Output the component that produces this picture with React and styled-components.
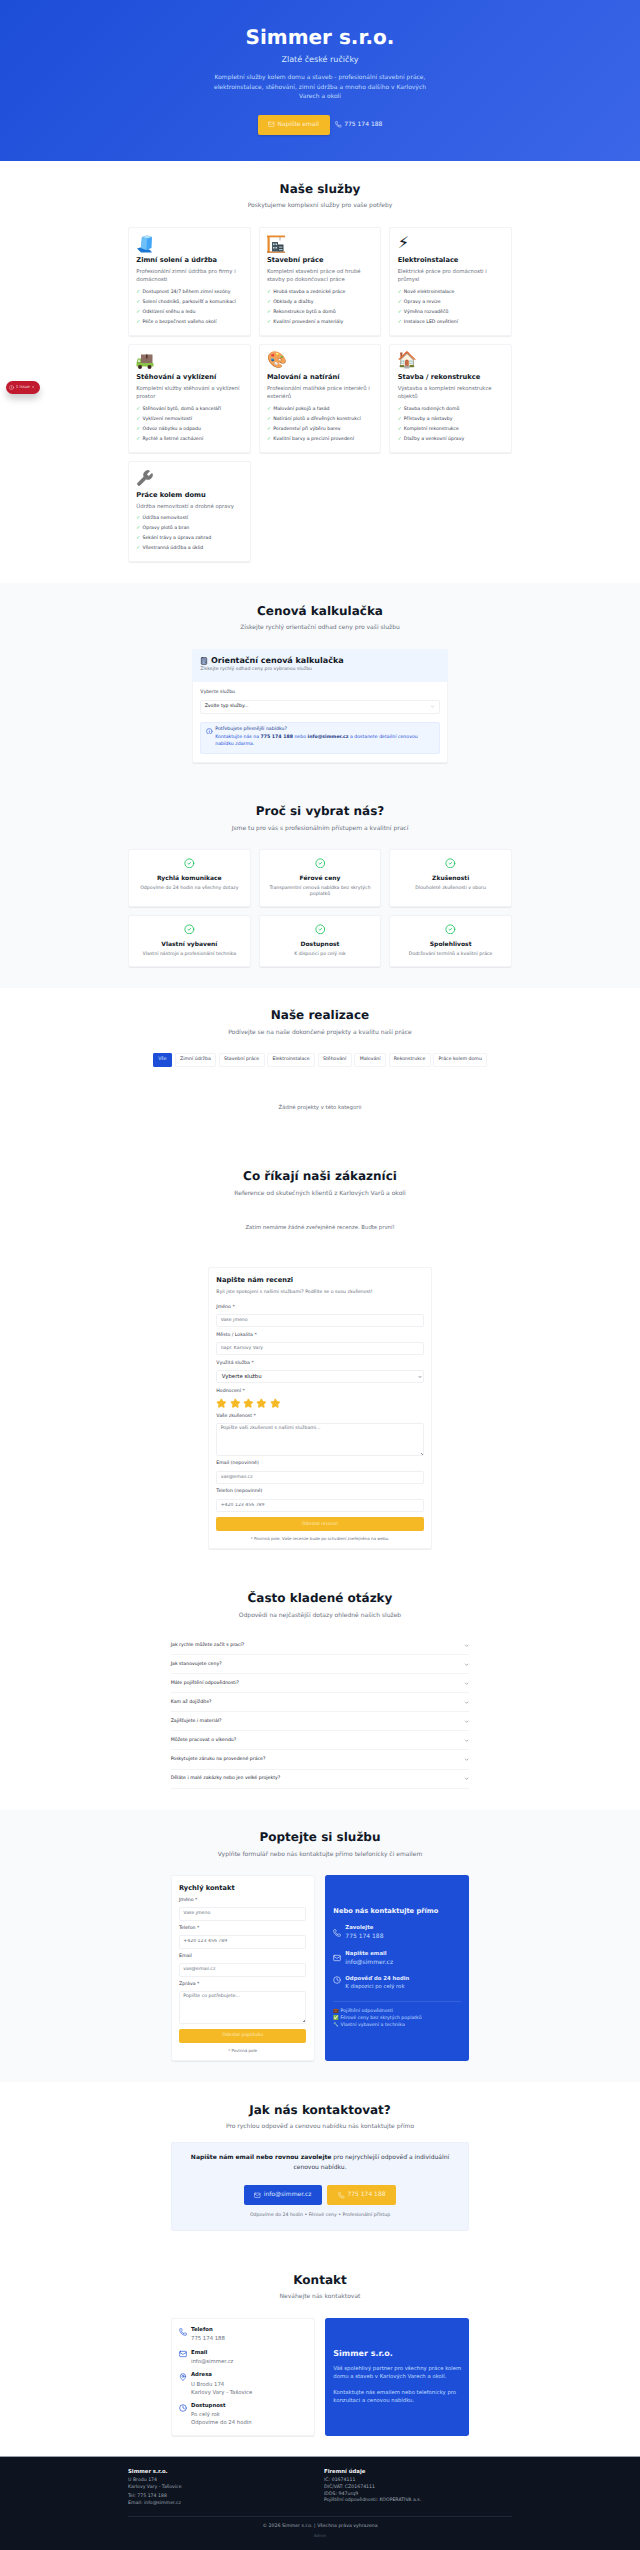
import React from 'react'
import styled, { createGlobalStyle } from 'styled-components'
import { AlertCircle, Calculator, CheckCircle2, ChevronDown, Clock, Info, Mail, MapPin, Phone, Star, Wrench, X } from 'lucide-react'

const GlobalStyle = createGlobalStyle`
    * { box-sizing: border-box; }
    html, body { margin: 0; padding: 0; background: #fff; }
    body {
        font-family: "DejaVu Sans", sans-serif;
        color: #111827;
        font-size: 5.33px;
        line-height: 8px;
        text-rendering: geometricPrecision;
    }
    input, textarea, button { font-family: inherit; text-rendering: geometricPrecision; }
`

const Page = styled.div`
    position: relative;
    width: 640px;
`

const Hero = styled.header`
    background: linear-gradient(135deg, #1d4ed8 0%, #3b66e8 100%);
    color: #fff;
    padding: 26.67px 0;
    text-align: center;
    height: 161.33px;
`

const HeroTitle = styled.h1`
    margin: 0 0 8px;
    font-size: 20px;
    line-height: 20px;
    font-weight: 700;
`

const HeroSub = styled.p`
    margin: 0 0 8px;
    font-size: 8px;
    line-height: 10.67px;
    color: #dbeafe;
`

const HeroText = styled.p`
    margin: 0 auto 13.33px;
    width: 224px;
    font-size: 6px;
    line-height: 9.33px;
    color: #bfdbfe;
`

const HeroActions = styled.div`
    display: flex;
    justify-content: center;
    align-items: center;
    gap: 5.33px;
`

const ActionButton = styled.a`
    display: inline-flex;
    align-items: center;
    justify-content: center;
    gap: 2.67px;
    height: 20px;
    padding: 0 10.67px;
    border-radius: 2px;
    font-size: 6px;
    color: ${p => p.$light ? '#dbe6fd' : '#fdf0cc'};
    background: ${p => p.$blue ? '#1d4ed8' : '#f6b926'};
    box-shadow: ${p => p.$shadow ? '0 1px 2px rgba(0,0,0,.18)' : 'none'};
`

const HeroPhone = styled.a`
    display: inline-flex;
    align-items: center;
    gap: 2.67px;
    font-size: 6px;
    color: #e6edfd;
`

const Section = styled.section`
    padding: 21.33px 0;
    background: ${p => p.$muted ? '#f9fafc' : '#fff'};
`

const Head = styled.div`
    text-align: center;
    margin-bottom: ${p => p.$gap || 16}px;
`

const Title = styled.h2`
    margin: 0 0 5.33px;
    font-size: 12px;
    line-height: 13.33px;
    font-weight: 700;
    color: #111827;
`

const Sub = styled.p`
    margin: 0;
    font-size: 6px;
    line-height: 9.33px;
    color: #6b7280;
`

const Container = styled.div`
    width: ${p => p.$w || 384}px;
    margin: 0 auto;
`

const Grid3 = styled.div`
    display: grid;
    grid-template-columns: repeat(3, 1fr);
    gap: 8px;
`

const Card = styled.div`
    background: #fff;
    border-radius: 2.67px;
    padding: 8.33px;
    box-shadow: inset 0 0 0 1px #f2f3f6, 0 0.33px 1px rgba(0,0,0,.07);
`

const ServiceCard = styled(Card)`
    padding-bottom: 9.33px;
`

const Emoji = styled.div`
    font-size: 16px;
    line-height: 16px;
    height: 16px;
    margin-bottom: 5.33px;
    font-family: "DejaVu Sans", "Noto Color Emoji", sans-serif;
    svg { display: block; overflow: visible; }
`

const WrenchIcon = styled(Wrench)`
    margin-top: 0.5px;
    color: #767676;
    fill: #767676;
`

const ServiceTitle = styled.h3`
    margin: 0 0 2.67px;
    font-size: 6.67px;
    line-height: 9.33px;
    font-weight: 700;
`

const ServiceDesc = styled.p`
    margin: 0 0 5.33px;
    font-size: 5.33px;
    line-height: 8px;
    color: #6b7280;
`

const Bullets = styled.ul`
    list-style: none;
    margin: 0;
    padding: 0;
    display: flex;
    flex-direction: column;
    gap: 3.33px;
`

const Bullet = styled.li`
    display: flex;
    font-size: 4.67px;
    line-height: 6.67px;
    color: #374151;
    white-space: nowrap;
`

const Tick = styled.span`
    width: 6.2px;
    color: #22c55e;
`

const CalcCard = styled(Card)`
    padding: 0;
    overflow: hidden;
`

const CalcHead = styled.div`
    padding: 8.33px 8.33px 8px;
    background: #eff5fe;
`

const CalcTitle = styled.div`
    display: flex;
    align-items: center;
    gap: 2.67px;
    margin-bottom: 2px;
    font-size: 8px;
    line-height: 8px;
    font-weight: 700;
    svg { fill: #bfd3fb; }
`

const Small = styled.p`
    margin: 0 0 ${p => p.$gap || 0}px;
    font-size: 4.67px;
    line-height: 6.67px;
    color: #6b7280;
`

const CalcBody = styled.div`
    padding: 8.67px 8.33px 8.33px;
`

const Label = styled.label`
    display: block;
    margin-bottom: ${p => p.$gap || 2.67}px;
    font-size: 4.67px;
    line-height: 6.67px;
    color: #374151;
`

const Field = styled.div`
    margin-bottom: ${p => p.$gap ?? 5.33}px;
`

const Input = styled.input`
    display: block;
    width: 100%;
    height: 13.33px;
    padding: 0 4.33px;
    font-size: 4.67px;
    color: #111827;
    background: #fff;
    border: 0;
    box-shadow: inset 0 0 0 1px #eef0f3;
    border-radius: 2px;
    outline: none;
    &::placeholder { color: #6b7280; }
`

const Area = styled.div`
    position: relative;
    &::after {
        content: "";
        position: absolute;
        right: 1px;
        bottom: 1.5px;
        width: 2.5px;
        height: 2.5px;
        background: linear-gradient(135deg, transparent 50%, #8b8f96 50%, #8b8f96 62%, transparent 62%, transparent 75%, #8b8f96 75%);
    }
`

const TextArea = styled.textarea`
    display: block;
    width: 100%;
    height: 32.67px;
    padding: 2.67px 4.33px;
    font-size: 4.67px;
    line-height: 6.67px;
    border: 0;
    box-shadow: inset 0 0 0 1px #eef0f3;
    border-radius: 2px;
    outline: none;
    resize: none;
    &::placeholder { color: #6b7280; }
`

const SelectBox = styled.div`
    display: flex;
    align-items: center;
    justify-content: space-between;
    height: 13.33px;
    padding: ${p => p.$native ? '0 1.5px 0 5.5px' : '0 4.33px'};
    font-size: ${p => p.$native ? 5.33 : 4.67}px;
    color: #111827;
    background: #fff;
    box-shadow: inset 0 0 0 1px #eef0f3;
    border-radius: 2px;
    svg { color: ${p => p.$native ? '#111827' : '#9ca3af'}; }
`

const Notice = styled.div`
    display: flex;
    gap: 2.67px;
    padding: 5.67px;
    background: #eff6ff;
    box-shadow: inset 0 0 0 1px #e3edfd;
    border-radius: 2.67px;
    svg { flex: none; color: #1d4ed8; margin-top: 0.5px; }
`

const NoticeHead = styled.div`
    margin-bottom: 1.33px;
    font-size: 4.67px;
    line-height: 6.67px;
    color: #1e3a8a;
`

const NoticeText = styled.div`
    font-size: 4.67px;
    line-height: 6.67px;
    color: #1d4ed8;
    b { color: #1e3a8a; }
`

const WhyCard = styled(Card)`
    text-align: center;
    svg { display: block; margin: 0 auto 5.33px; color: #22c55e; }
`

const WhyTitle = styled.h3`
    margin: 0 0 2.67px;
    font-size: 6px;
    line-height: 9.33px;
    font-weight: 700;
`

const Filters = styled.div`
    display: flex;
    justify-content: center;
    gap: 2.67px;
`

const Filter = styled.button`
    height: 13.33px;
    padding: 0 5.33px;
    font-size: 4.67px;
    border-radius: 2px;
    border: 0;
    box-shadow: inset 0 0 0 1px ${p => p.$active ? '#1d4ed8' : '#f2f3f6'};
    background: ${p => p.$active ? '#1d4ed8' : '#fff'};
    color: ${p => p.$active ? '#dbe6fd' : '#374151'};
`

const Empty = styled.p`
    margin: ${p => p.$top}px 0 ${p => p.$bottom}px;
    text-align: center;
    font-size: 5.33px;
    line-height: 8px;
    color: #6b7280;
`

const ReviewCard = styled(Card)`
    width: 224px;
    margin: 0 auto;
`

const FormTitle = styled.h3`
    margin: 0 0 ${p => p.$gap}px;
    font-size: 6.67px;
    line-height: 9.33px;
    font-weight: 700;
`

const Stars = styled.div`
    display: flex;
    gap: 2.67px;
    svg { color: #f6b926; fill: #f6b926; }
`

const SubmitButton = styled.button`
    display: block;
    width: 100%;
    height: 13.33px;
    border: 0;
    border-radius: 2px;
    font-size: 4.67px;
    color: #fde9b4;
    background: #f6b926;
`

const FormNote = styled.p`
    margin: 5.33px 0 -0.33px;
    text-align: center;
    font-size: 4px;
    line-height: 5.33px;
    color: #6b7280;
`

const FaqRow = styled.div`
    display: flex;
    align-items: center;
    justify-content: space-between;
    height: 19.08px;
    font-size: 4.67px;
    color: #1f2937;
    box-shadow: inset 0 -1px 0 #f2f3f6;
    svg { color: #6b7280; }
`

const Split = styled.div`
    display: grid;
    grid-template-columns: 1fr 1fr;
    gap: 10.67px;
`

const BlueCard = styled.div`
    display: flex;
    flex-direction: column;
    justify-content: center;
    padding: 8px;
    border-radius: 2.67px;
    background: #1d4ed8;
    color: #fff;
`

const BlueTitle = styled.h3`
    margin: 0 0 ${p => p.$gap}px;
    font-size: ${p => p.$size}px;
    line-height: ${p => p.$lh}px;
    font-weight: 700;
    color: #f3f6fe;
`

const BlueRow = styled.div`
    display: flex;
    gap: 4px;
    margin-bottom: 8px;
    align-items: ${p => p.$top ? 'flex-start' : 'center'};
    svg { flex: none; margin-top: ${p => p.$top ? 1.33 : 0}px; color: #dbe6fd; }
`

const BlueRowTitle = styled.div`
    font-size: 5.33px;
    line-height: 8px;
    font-weight: 700;
    color: #e6edfd;
`

const BlueRowValue = styled.div`
    font-size: ${p => p.$size}px;
    line-height: ${p => p.$size > 5.5 ? 9.33 : 8}px;
    color: #bfdbfe;
`

const BlueList = styled.div`
    margin-top: 2.33px;
    padding-top: 8px;
    box-shadow: inset 0 1px 0 #3760dc;
    font-size: 4.67px;
    line-height: 6.67px;
    color: #bfdbfe;
`

const BlueText = styled.p`
    margin: 0 0 ${p => p.$gap || 0}px;
    font-size: 5.33px;
    line-height: 8px;
    color: #bfdbfe;
`

const ReachCard = styled.div`
    padding: 11px;
    text-align: center;
    background: #f1f5fd;
    box-shadow: inset 0 0 0 1px #ebf0fb;
    border-radius: 2.67px;
`

const ReachText = styled.p`
    margin: 0 0 13.33px;
    font-size: 6px;
    line-height: 9.33px;
    color: #374151;
    b { color: #111827; }
`

const ReachActions = styled.div`
    display: flex;
    justify-content: center;
    gap: 5.33px;
    margin-bottom: 8px;
`

const ContactRow = styled.div`
    display: flex;
    gap: 4px;
    margin-bottom: ${p => p.$last ? 0 : 5.33}px;
    svg { flex: none; margin-top: 1.67px; color: #1d4ed8; }
`

const ContactTitle = styled.div`
    margin-bottom: 1.33px;
    font-size: 5.33px;
    line-height: 8px;
    font-weight: 700;
`

const ContactValue = styled.div`
    font-size: 5.33px;
    line-height: 8px;
    color: #6b7280;
`

const Footer = styled.footer`
    height: 94px;
    padding-top: 10.67px;
    background: #0d1420;
    box-shadow: 0 -1px 0 #9aa0a8;
`

const FooterCols = styled.div`
    display: grid;
    grid-template-columns: 1fr 1fr;
    gap: 8px;
`

const FooterTitle = styled.h4`
    margin: 0 0 2.67px;
    font-size: 5.33px;
    line-height: 8px;
    font-weight: 700;
    color: #f3f4f6;
`

const FooterLine = styled.div`
    margin-top: ${p => p.$top || 0}px;
    font-size: 4.67px;
    line-height: 6.67px;
    color: #9ca3af;
`

const FooterBottom = styled.div`
    margin-top: 8.33px;
    padding-top: 7.67px;
    box-shadow: inset 0 1px 0 #1f2937;
    text-align: center;
    font-size: 4.67px;
    line-height: 6.67px;
    color: #9ca3af;
`

const Admin = styled.div`
    margin-top: 3px;
    font-size: 4px;
    line-height: 5.33px;
    color: #4b5563;
`

const IssueBadge = styled.div`
    position: absolute;
    left: 6px;
    top: 380.67px;
    display: flex;
    align-items: center;
    gap: 1.67px;
    height: 13.33px;
    padding: 0 5px 0 3px;
    border-radius: 6.67px;
    font-size: 4px;
    color: #f7d9dd;
    background: #c11a2f;
    box-shadow: 0 5px 7px rgba(0,0,0,.2);
`

const IceIcon = () => (
    <svg width="18" height="18" viewBox="0 0 18 18">
        <path d="M1 13.5 L6 12 L14 15 L16 17.5 L5 17.5 Z" fill="#1976d2" />
        <path d="M6 2 L11 0.5 L16 2 L15.5 13 L10.5 15 L5 13 Z" fill="#42a5f5" />
        <path d="M6 2 L11 0.5 L16 2 L11 3.6 Z" fill="#b3e0fb" />
        <path d="M5.8 2.2 L11 3.6 L10.5 15 L5 13 Z" fill="#6fc0f7" />
    </svg>
)

const CraneIcon = () => (
    <svg width="18" height="18" viewBox="0 0 18 18">
        <rect x="0" y="0.5" width="18" height="1.8" fill="#e8892b" />
        <rect x="0.5" y="2" width="2.2" height="15.5" fill="#e8892b" />
        <rect x="0" y="16.5" width="18" height="1.2" fill="#c46a1c" />
        <path d="M13 2 V5.5" stroke="#6b6b6b" strokeWidth="0.6" />
        <rect x="5" y="7" width="6" height="9.5" fill="#455a64" />
        <rect x="11" y="9.5" width="5.5" height="7" fill="#37474f" />
        <rect x="6" y="8.5" width="1.5" height="1.5" fill="#cfd8dc" />
        <rect x="8.5" y="8.5" width="1.5" height="1.5" fill="#cfd8dc" />
        <rect x="6" y="12" width="1.5" height="1.5" fill="#cfd8dc" />
        <rect x="8.5" y="12" width="1.5" height="1.5" fill="#cfd8dc" />
        <rect x="12" y="11.5" width="3.5" height="1.2" fill="#b0bec5" />
        <rect x="12" y="14" width="3.5" height="1.2" fill="#b0bec5" />
    </svg>
)

const TruckIcon = () => (
    <svg width="18" height="18" viewBox="0 0 18 18">
        <rect x="5" y="2.5" width="11.5" height="9" fill="#8d6e63" />
        <rect x="10" y="2.5" width="1.6" height="4" fill="#4e342e" />
        <rect x="0.5" y="11" width="17" height="3.5" rx="0.5" fill="#8bc34a" />
        <path d="M0.5 11 L1.8 6.5 H5 V11 Z" fill="#7cb342" />
        <path d="M1.6 10 L2.4 7.5 H4.2 V10 Z" fill="#dcedc8" />
        <circle cx="4" cy="15" r="2" fill="#3e2723" />
        <circle cx="13.5" cy="15" r="2" fill="#3e2723" />
    </svg>
)

const services = [
    { icon: <IceIcon />, title: 'Zimní solení a údržba', desc: 'Profesionální zimní údržba pro firmy i domácnosti', items: ['Dostupnost 24/7 během zimní sezóny', 'Solení chodníků, parkovišť a komunikací', 'Odklízení sněhu a ledu', 'Péče o bezpečnost vašeho okolí'] },
    { icon: <CraneIcon />, title: 'Stavební práce', desc: 'Kompletní stavební práce od hrubé stavby po dokončovací práce', items: ['Hrubá stavba a zednické práce', 'Obklady a dlažby', 'Rekonstrukce bytů a domů', 'Kvalitní provedení a materiály'] },
    { icon: '⚡', title: 'Elektroinstalace', desc: 'Elektrické práce pro domácnosti i průmysl', items: ['Nové elektroinstalace', 'Opravy a revize', 'Výměna rozvaděčů', 'Instalace LED osvětlení'] },
    { icon: <TruckIcon />, title: 'Stěhování a vyklízení', desc: 'Kompletní služby stěhování a vyklízení prostor', items: ['Stěhování bytů, domů a kanceláří', 'Vyklízení nemovitostí', 'Odvoz nábytku a odpadu', 'Rychlé a šetrné zacházení'] },
    { icon: '🎨', title: 'Malování a natírání', desc: 'Profesionální malířské práce interiérů i exteriérů', items: ['Malování pokojů a fasád', 'Natírání plotů a dřevěných konstrukcí', 'Poradenství při výběru barev', 'Kvalitní barvy a precizní provedení'] },
    { icon: '🏠', title: 'Stavba / rekonstrukce', desc: 'Výstavba a kompletní rekonstrukce objektů', items: ['Stavba rodinných domů', 'Přístavby a nástavby', 'Kompletní rekonstrukce', 'Dlažby a venkovní úpravy'] },
    { icon: <WrenchIcon size={18} strokeWidth={1} />, title: 'Práce kolem domu', desc: 'Údržba nemovitostí a drobné opravy', items: ['Údržba nemovitostí', 'Opravy plotů a bran', 'Sekání trávy a úprava zahrad', 'Všestranná údržba a úklid'] },
]

const reasons = [
    ['Rychlá komunikace', 'Odpovíme do 24 hodin na všechny dotazy'],
    ['Férové ceny', 'Transparentní cenová nabídka bez skrytých poplatků'],
    ['Zkušenosti', 'Dlouholeté zkušenosti v oboru'],
    ['Vlastní vybavení', 'Vlastní nástroje a profesionální technika'],
    ['Dostupnost', 'K dispozici po celý rok'],
    ['Spolehlivost', 'Dodržování termínů a kvalitní práce'],
]

const filters = ['Vše', 'Zimní údržba', 'Stavební práce', 'Elektroinstalace', 'Stěhování', 'Malování', 'Rekonstrukce', 'Práce kolem domu']

const faqs = [
    'Jak rychle můžete začít s prací?',
    'Jak stanovujete ceny?',
    'Máte pojištění odpovědnosti?',
    'Kam až dojíždíte?',
    'Zajišťujete i materiál?',
    'Můžete pracovat o víkendu?',
    'Poskytujete záruku na provedené práce?',
    'Děláte i malé zakázky nebo jen velké projekty?',
]

const Icon = ({ as: Glyph, size = 6.67 }) => <Glyph size={size} strokeWidth={2} />

const SectionHead = ({ title, sub, gap }) => (
    <Head $gap={gap}>
        <Title>{title}</Title>
        <Sub>{sub}</Sub>
    </Head>
)

const TextField = ({ label, placeholder }) => (
    <Field>
        <Label>{label}</Label>
        <Input placeholder={placeholder} readOnly />
    </Field>
)

const AreaField = ({ label, placeholder }) => (
    <Field>
        <Label>{label}</Label>
        <Area>
            <TextArea placeholder={placeholder} readOnly />
        </Area>
    </Field>
)

const App = () => (
    <Page>
        <GlobalStyle />
        <Hero>
            <HeroTitle>Simmer s.r.o.</HeroTitle>
            <HeroSub>Zlaté české ručičky</HeroSub>
            <HeroText>Kompletní služby kolem domu a staveb - profesionální stavební práce, elektroinstalace, stěhování, zimní údržba a mnoho dalšího v Karlových Varech a okolí</HeroText>
            <HeroActions>
                <ActionButton $shadow><Icon as={Mail} />Napište email</ActionButton>
                <HeroPhone><Icon as={Phone} />775 174 188</HeroPhone>
            </HeroActions>
        </Hero>

        <Section>
            <SectionHead title="Naše služby" sub="Poskytujeme komplexní služby pro vaše potřeby" />
            <Container>
                <Grid3>
                    {services.map(s => (
                        <ServiceCard key={s.title}>
                            <Emoji>{s.icon}</Emoji>
                            <ServiceTitle>{s.title}</ServiceTitle>
                            <ServiceDesc>{s.desc}</ServiceDesc>
                            <Bullets>
                                {s.items.map(i => <Bullet key={i}><Tick>✓</Tick>{i}</Bullet>)}
                            </Bullets>
                        </ServiceCard>
                    ))}
                </Grid3>
            </Container>
        </Section>

        <Section $muted>
            <SectionHead title="Cenová kalkulačka" sub="Získejte rychlý orientační odhad ceny pro vaši službu" />
            <Container $w={256}>
                <CalcCard>
                    <CalcHead>
                        <CalcTitle><Icon as={Calculator} size={8} />Orientační cenová kalkulačka</CalcTitle>
                        <Small>Získejte rychlý odhad ceny pro vybranou službu</Small>
                    </CalcHead>
                    <CalcBody>
                        <Field $gap={8}>
                            <Label $gap={3.33}>Vyberte službu</Label>
                            <SelectBox>Zvolte typ služby...<ChevronDown size={5.33} /></SelectBox>
                        </Field>
                        <Notice>
                            <Icon as={Info} size={6.67} />
                            <div>
                                <NoticeHead>Potřebujete přesnější nabídku?</NoticeHead>
                                <NoticeText>Kontaktujte nás na <b>775 174 188</b> nebo <b>info@simmer.cz</b> a dostanete detailní cenovou nabídku zdarma.</NoticeText>
                            </div>
                        </Notice>
                    </CalcBody>
                </CalcCard>
            </Container>
        </Section>

        <Section $muted>
            <SectionHead title="Proč si vybrat nás?" sub="Jsme tu pro vás s profesionálním přístupem a kvalitní prací" />
            <Container>
                <Grid3>
                    {reasons.map(([title, text]) => (
                        <WhyCard key={title}>
                            <Icon as={CheckCircle2} size={10.67} />
                            <WhyTitle>{title}</WhyTitle>
                            <Small>{text}</Small>
                        </WhyCard>
                    ))}
                </Grid3>
            </Container>
        </Section>

        <Section>
            <SectionHead title="Naše realizace" sub="Podívejte se na naše dokončené projekty a kvalitu naší práce" />
            <Filters>
                {filters.map((f, i) => <Filter key={f} $active={i === 0}>{f}</Filter>)}
            </Filters>
            <Empty $top={37} $bottom={15.67}>Žádné projekty v této kategorii</Empty>
        </Section>

        <Section>
            <SectionHead title="Co říkají naši zákazníci" sub="Reference od skutečných klientů z Karlových Varů a okolí" />
            <Empty $top={26.67} $bottom={35}>Zatím nemáme žádné zveřejněné recenze. Buďte první!</Empty>
            <ReviewCard>
                <FormTitle $gap={5}>Napište nám recenzi</FormTitle>
                <Small $gap={8}>Byli jste spokojeni s našimi službami? Podělte se o svou zkušenost!</Small>
                <TextField label="Jméno *" placeholder="Vaše jméno" />
                <TextField label="Město / Lokalita *" placeholder="např. Karlovy Vary" />
                <Field>
                    <Label>Využitá služba *</Label>
                    <SelectBox $native>Vyberte službu<ChevronDown size={4} strokeWidth={3} /></SelectBox>
                </Field>
                <Field>
                    <Label>Hodnocení *</Label>
                    <Stars>
                        {[1, 2, 3, 4, 5].map(n => <Star key={n} size={10.67} />)}
                    </Stars>
                </Field>
                <AreaField label="Vaše zkušenost *" placeholder="Popište vaši zkušenost s našimi službami..." />
                <TextField label="Email (nepovinné)" placeholder="vas@email.cz" />
                <TextField label="Telefon (nepovinné)" placeholder="+420 123 456 789" />
                <SubmitButton>Odeslat recenzi</SubmitButton>
                <FormNote>* Povinná pole. Vaše recenze bude po schválení zveřejněna na webu.</FormNote>
            </ReviewCard>
        </Section>

        <Section>
            <SectionHead title="Často kladené otázky" sub="Odpovědi na nejčastější dotazy ohledně našich služeb" />
            <Container $w={298.67}>
                {faqs.map(q => <FaqRow key={q}>{q}<ChevronDown size={5.33} strokeWidth={2.5} /></FaqRow>)}
            </Container>
        </Section>

        <Section $muted>
            <SectionHead title="Poptejte si službu" sub="Vyplňte formulář nebo nás kontaktujte přímo telefonicky či emailem" />
            <Container $w={298.67}>
                <Split>
                    <Card>
                        <FormTitle $gap={5}>Rychlý kontakt</FormTitle>
                        <TextField label="Jméno *" placeholder="Vaše jméno" />
                        <TextField label="Telefon *" placeholder="+420 123 456 789" />
                        <TextField label="Email" placeholder="vas@email.cz" />
                        <AreaField label="Zpráva *" placeholder="Popište co potřebujete..." />
                        <SubmitButton>Odeslat poptávku</SubmitButton>
                        <FormNote>* Povinná pole</FormNote>
                    </Card>
                    <BlueCard>
                        <BlueTitle $size={6.67} $lh={9.33} $gap={8}>Nebo nás kontaktujte přímo</BlueTitle>
                        <BlueRow>
                            <Icon as={Phone} size={8} />
                            <div><BlueRowTitle>Zavolejte</BlueRowTitle><BlueRowValue $size={6}>775 174 188</BlueRowValue></div>
                        </BlueRow>
                        <BlueRow>
                            <Icon as={Mail} size={8} />
                            <div><BlueRowTitle>Napište email</BlueRowTitle><BlueRowValue $size={6}>info@simmer.cz</BlueRowValue></div>
                        </BlueRow>
                        <BlueRow $top>
                            <Icon as={Clock} size={8} />
                            <div><BlueRowTitle>Odpověď do 24 hodin</BlueRowTitle><BlueRowValue $size={5.33}>K dispozici po celý rok</BlueRowValue></div>
                        </BlueRow>
                        <BlueList>
                            <div>💼 Pojištění odpovědnosti</div>
                            <div>✅ Férové ceny bez skrytých poplatků</div>
                            <div>🔧 Vlastní vybavení a technika</div>
                        </BlueList>
                    </BlueCard>
                </Split>
            </Container>
        </Section>

        <Section>
            <SectionHead title="Jak nás kontaktovat?" sub="Pro rychlou odpověď a cenovou nabídku nás kontaktujte přímo" gap={10.67} />
            <Container $w={298.67}>
                <ReachCard>
                    <ReachText><b>Napište nám email nebo rovnou zavolejte</b> pro nejrychlejší odpověď a individuální cenovou nabídku.</ReachText>
                    <ReachActions>
                        <ActionButton $blue $light><Icon as={Mail} />info@simmer.cz</ActionButton>
                        <ActionButton><Icon as={Phone} />775 174 188</ActionButton>
                    </ReachActions>
                    <Small>Odpovíme do 24 hodin • Férové ceny • Profesionální přístup</Small>
                </ReachCard>
            </Container>
        </Section>

        <Section>
            <SectionHead title="Kontakt" sub="Neváhejte nás kontaktovat" />
            <Container $w={298.67}>
                <Split>
                    <Card>
                        <ContactRow>
                            <Icon as={Phone} size={8} />
                            <div><ContactTitle>Telefon</ContactTitle><ContactValue>775 174 188</ContactValue></div>
                        </ContactRow>
                        <ContactRow>
                            <Icon as={Mail} size={8} />
                            <div><ContactTitle>Email</ContactTitle><ContactValue>info@simmer.cz</ContactValue></div>
                        </ContactRow>
                        <ContactRow>
                            <Icon as={MapPin} size={8} />
                            <div><ContactTitle>Adresa</ContactTitle><ContactValue>U Brodu 174</ContactValue><ContactValue>Karlovy Vary - Tašovice</ContactValue></div>
                        </ContactRow>
                        <ContactRow $last>
                            <Icon as={Clock} size={8} />
                            <div><ContactTitle>Dostupnost</ContactTitle><ContactValue>Po celý rok</ContactValue><ContactValue>Odpovíme do 24 hodin</ContactValue></div>
                        </ContactRow>
                    </Card>
                    <BlueCard>
                        <BlueTitle $size={8} $lh={10.67} $gap={5.33}>Simmer s.r.o.</BlueTitle>
                        <BlueText $gap={8}>Váš spolehlivý partner pro všechny práce kolem domu a staveb v Karlových Varech a okolí.</BlueText>
                        <BlueText>Kontaktujte nás emailem nebo telefonicky pro konzultaci a cenovou nabídku.</BlueText>
                    </BlueCard>
                </Split>
            </Container>
        </Section>

        <Footer>
            <Container>
                <FooterCols>
                    <div>
                        <FooterTitle>Simmer s.r.o.</FooterTitle>
                        <FooterLine>U Brodu 174</FooterLine>
                        <FooterLine>Karlovy Vary - Tašovice</FooterLine>
                        <FooterLine $top={2.67}>Tel: 775 174 188</FooterLine>
                        <FooterLine>Email: info@simmer.cz</FooterLine>
                    </div>
                    <div>
                        <FooterTitle>Firemní údaje</FooterTitle>
                        <FooterLine>IČ: 01674111</FooterLine>
                        <FooterLine>DIČ/VAT: CZ01674111</FooterLine>
                        <FooterLine>IDDS: 947urq9</FooterLine>
                        <FooterLine>Pojištění odpovědnosti: KOOPERATIVA a.s.</FooterLine>
                    </div>
                </FooterCols>
                <FooterBottom>
                    © 2026 Simmer s.r.o. | Všechna práva vyhrazena
                    <Admin>Admin</Admin>
                </FooterBottom>
            </Container>
        </Footer>

        <IssueBadge><AlertCircle size={5} strokeWidth={2} />1 Issue<X size={4} strokeWidth={2} /></IssueBadge>
    </Page>
)

export default App
